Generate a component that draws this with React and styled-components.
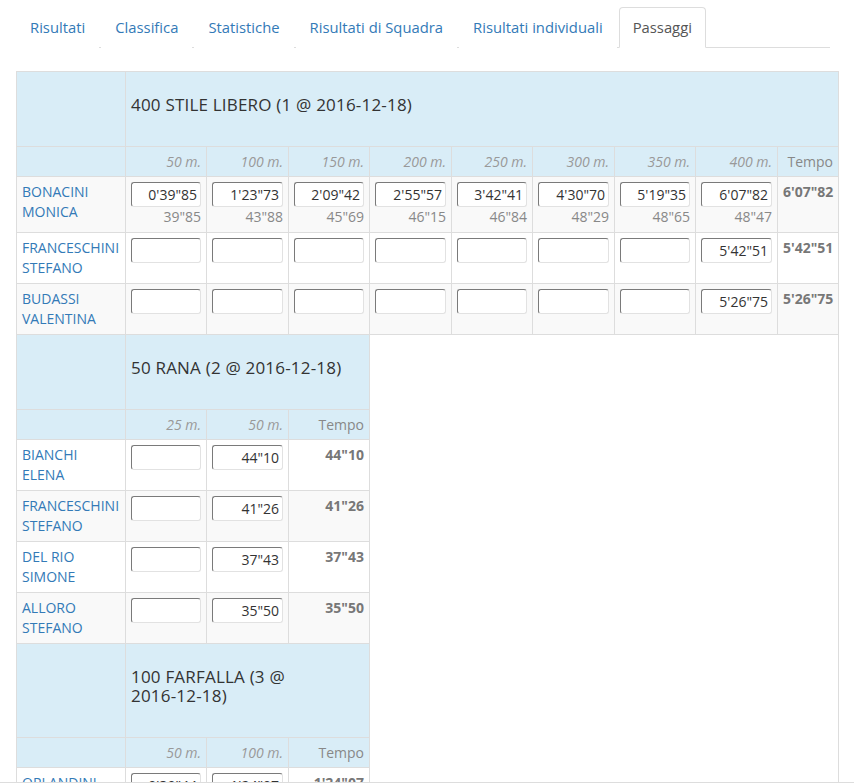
import styled, { createGlobalStyle } from 'styled-components'

const GlobalStyle = createGlobalStyle`
  body {
    margin: 0;
    background: #fff;
    font-family: 'Open Sans', 'Liberation Sans', sans-serif;
    font-size: 14px;
    line-height: 1.42857;
    color: #333;
  }
`

const tabs = ['Risultati', 'Classifica', 'Statistiche', 'Risultati di Squadra', 'Risultati individuali', 'Passaggi']

const sections = [
  {
    race: '400 STILE LIBERO (1 @',
    date: '2016-12-18)',
    distances: [50, 100, 150, 200, 250, 300, 350, 400],
    rows: [
      {
        last: 'BONACINI',
        first: 'MONICA',
        times: ["0'39\"85", "1'23\"73", "2'09\"42", "2'55\"57", "3'42\"41", "4'30\"70", "5'19\"35", "6'07\"82"],
        splits: ['39"85', '43"88', '45"69', '46"15', '46"84', '48"29', '48"65', '48"47'],
        total: "6'07\"82",
      },
      {
        last: 'FRANCESCHINI',
        first: 'STEFANO',
        times: ['', '', '', '', '', '', '', "5'42\"51"],
        total: "5'42\"51",
      },
      {
        last: 'BUDASSI',
        first: 'VALENTINA',
        times: ['', '', '', '', '', '', '', "5'26\"75"],
        total: "5'26\"75",
      },
    ],
  },
  {
    race: '50 RANA (2 @',
    date: '2016-12-18)',
    distances: [25, 50],
    rows: [
      { last: 'BIANCHI', first: 'ELENA', times: ['', '44"10'], total: '44"10' },
      { last: 'FRANCESCHINI', first: 'STEFANO', times: ['', '41"26'], total: '41"26' },
      { last: 'DEL RIO', first: 'SIMONE', times: ['', '37"43'], total: '37"43' },
      { last: 'ALLORO', first: 'STEFANO', times: ['', '35"50'], total: '35"50' },
    ],
  },
  {
    race: '100 FARFALLA (3 @',
    date: '2016-12-18)',
    distances: [50, 100],
    rows: [{ last: 'ORLANDINI', first: 'MARCO', times: ["0'39\"44", "1'24\"07"], total: "1'24\"07" }],
  },
]

const colWidths = [109, 81, 82, 81, 82, 81, 82, 81, 82, 61]

const App = () => {
  return (
    <>
      <GlobalStyle />
      <Page>
        <Tabs>
          {tabs.map((t) => (
            <Tab key={t} $active={t === 'Passaggi'}>
              {t}
            </Tab>
          ))}
        </Tabs>
        <Table>
          <colgroup>
            {colWidths.map((w, i) => (
              <col key={i} style={{ width: w }} />
            ))}
          </colgroup>
          <tbody>
            {sections.map((s) => [
              <tr key={s.race + '-t'}>
                <InfoCell />
                <TitleCell colSpan={s.distances.length + 1}>
                  <h4>
                    {s.race} <Date>{s.date}</Date>
                  </h4>
                </TitleCell>
              </tr>,
              <tr key={s.race + '-h'}>
                <HeadCell />
                {s.distances.map((d) => (
                  <HeadCell key={d} $italic>
                    {d} m.
                  </HeadCell>
                ))}
                <HeadCell>Tempo</HeadCell>
              </tr>,
              ...s.rows.map((r) => (
                <Row key={s.race + r.last}>
                  <NameCell>
                    <a>
                      {r.last}
                      <br />
                      {r.first}
                    </a>
                  </NameCell>
                  {r.times.map((t, i) => (
                    <SplitCell key={i}>
                      <TimeInput defaultValue={t} />
                      {r.splits && <Split>{r.splits[i]}</Split>}
                    </SplitCell>
                  ))}
                  <TotalCell>{r.total}</TotalCell>
                </Row>
              )),
            ])}
          </tbody>
        </Table>
      </Page>
      <Footer />
    </>
  )
}

export default App

const Page = styled.div`
  padding: 7px 0 40px 16px;
`

const Tabs = styled.ul`
  display: flex;
  width: 814px;
  margin: 0;
  padding: 0;
  list-style: none;
  border-bottom: 1px solid #ddd;
`

const Tab = styled.li`
  margin: 0 2px -1px 0;
  padding: 9px 13px 10px;
  font-size: 14.8px;
  line-height: 20px;
  border: 1px solid ${({ $active }) => ($active ? '#ddd' : 'transparent')};
  border-bottom-color: ${({ $active }) => ($active ? '#fff' : 'transparent')};
  border-radius: 4px 4px 0 0;
  background: #fff;
  color: ${({ $active }) => ($active ? '#555' : '#337ab7')};
`

const Table = styled.table`
  width: 822px;
  margin-top: 23px;
  table-layout: fixed;
  border-collapse: collapse;
  border: 1px solid #ddd;

  td {
    padding: 5px;
    border: 1px solid #ddd;
    vertical-align: top;
  }
`

const InfoCell = styled.td`
  background: #d9edf7;
`

const TitleCell = styled(InfoCell)`
  h4 {
    margin: 18px 0 27px;
    font-size: 17px;
    letter-spacing: 0.2px;
    font-weight: normal;
    line-height: 19px;
    color: #333;
  }
`

const Date = styled.span`
  white-space: nowrap;
`

const HeadCell = styled(InfoCell)`
  && {
    padding: 5px 5px 4px;
  }
  text-align: right;
  font-style: ${({ $italic }) => ($italic ? 'italic' : 'normal')};
  color: ${({ $italic }) => ($italic ? '#999' : '#888')};
`

const Row = styled.tr`
  &:nth-child(odd) {
    background: #f9f9f9;
  }
`

const NameCell = styled.td`
  a {
    color: #337ab7;
  }
`

const SplitCell = styled.td`
  text-align: right;
`

const TimeInput = styled.input`
  display: block;
  box-sizing: border-box;
  width: 100%;
  height: 25px;
  margin: 0;
  padding: 0 3px;
  border: 1px solid;
  border-color: #7a7a7a #e2e2e2 #e2e2e2 #7a7a7a;
  border-radius: 3px;
  background: #fff;
  font-family: 'Open Sans', 'Liberation Sans', sans-serif;
  font-size: 14px;
  color: #333;
  text-align: right;
`

const Split = styled.div`
  color: #888;
`

const TotalCell = styled.td`
  text-align: right;
  font-weight: bold;
  color: #777;
`

const Footer = styled.div`
  position: fixed;
  left: 0;
  right: 0;
  bottom: 0;
  height: 1px;
  background: #ddd;
`
